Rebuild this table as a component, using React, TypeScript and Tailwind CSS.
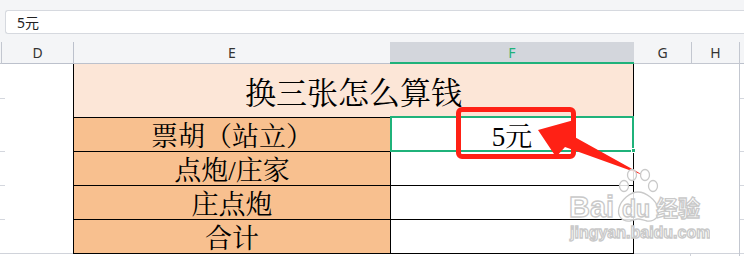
export default function App() {
  const sans = "font-['Noto_Sans','Noto_Sans_CJK_SC',sans-serif]";
  const serif = "font-['Liberation_Serif','Noto_Serif_CJK_SC','Noto_Sans_CJK_SC',serif]";
  const rows = [
    { label: "票胡（站立）", value: "5元" },
    { label: "点炮/庄家", value: "" },
    { label: "庄点炮", value: "" },
    { label: "合计", value: "" },
  ];
  return (
    <div className="relative w-[744px] h-[256px] overflow-hidden bg-white">
      {/* formula bar */}
      <div className="h-[42px] bg-[#f4f5f7] pt-[10px] pl-[5px]">
        <div className={`h-[24px] bg-white border border-r-0 border-[#d6d9df] rounded-l-[3px] flex items-center pl-[11px] text-[14px] text-[#222] ${sans}`}>
          5元
        </div>
      </div>
      {/* column header */}
      <div className={`flex h-[22px] bg-[#f4f5f7] text-[14px] text-[#333] ${sans}`}>
        <div className="w-[2px] border-r border-b border-[#c3c7d0]" />
        <div className="w-[72px] border-r border-b border-[#bcc1cc] flex items-center justify-center">D</div>
        <div className="w-[316px] border-b border-[#bcc1cc] flex items-center justify-center">E</div>
        <div className="w-[244px] bg-[#d3d6dc] border-b-2 border-[#1fb27a] text-[#1fb27a] flex items-center justify-center">F</div>
        <div className="w-[58px] border-r border-b border-[#c3c7d0] flex items-center justify-center">G</div>
        <div className="w-[48px] border-r border-b border-[#c3c7d0] flex items-center justify-center">H</div>
        <div className="flex-1 border-b border-[#bcc1cc]" />
      </div>
      {/* body */}
      <div className="flex h-[192px]">
        {/* C/D */}
        <div className="w-[73px] flex flex-col">
          <div className="h-[189px] flex">
            <div className="w-[5px] flex flex-col">
              <div className="h-[35px] border-b border-[#d4d7de]" />
              <div className="h-[53px] border-b border-[#d4d7de]" />
              <div className="h-[34px] border-b border-[#d4d7de]" />
              <div className="h-[34px] border-b border-[#d4d7de]" />
            </div>
            <div className="flex-1" />
          </div>
          <div className="h-[1px] bg-[#d0d3da]" />
        </div>
        {/* table */}
        <div className="w-[561px] flex flex-col border-l border-r border-black self-start">
          <div className={`h-[54px] bg-[#fce6d7] border-b border-black flex items-center justify-center pt-[6px] text-[31px] leading-none text-black ${serif}`}>
            换三张怎么算钱
          </div>
          {rows.map((r, i) => (
            <div key={i} className="h-[34px] border-b border-black flex">
              <div className={`w-[317px] bg-[#f8c08f] border-r border-black flex items-center justify-center pt-[5px] text-[27px] leading-none text-black ${serif}`}>
                {r.label}
              </div>
              <div className={`flex-1 bg-white flex items-center justify-center pt-[5px] text-[27px] leading-none text-black ${serif}`}>
                {r.value}
              </div>
            </div>
          ))}
        </div>
        {/* G/H */}
        <div className="w-[105px] flex flex-col">
          <div className="h-[189px]" />
          <div className="h-[1px] bg-[#d0d3da]" />
          <div className="flex-1 flex">
            <div className="w-[57px] border-r border-[#d0d3da]" />
          </div>
        </div>
        {/* I */}
        <div className="flex-1 border-l border-[#c3c7d0] flex flex-col">
          <div className="h-[35px] border-b border-[#d4d7de]" />
          <div className="h-[53px] border-b border-[#d4d7de]" />
          <div className="h-[34px] border-b border-[#d4d7de]" />
          <div className="h-[34px] border-b border-[#d4d7de]" />
          <div className="h-[34px] border-b border-[#d4d7de]" />
        </div>
      </div>

      {/* selection */}
      <div className="absolute left-[390px] top-[116px] w-[244px] h-[36px] border-2 border-[#1fb27a]" />
      <div className="absolute left-[631px] top-[148px] w-[5px] h-[5px] bg-[#1fb27a] border border-white" />

      {/* red highlight rect */}
      <div className="absolute left-[456px] top-[107px] w-[120px] h-[52px] border-[5px] border-[#ff2115] rounded-[6px]" />

      {/* arrow */}
      <svg className="absolute left-0 top-0" width="744" height="256" viewBox="0 0 744 256">
        <polygon points="538,130 574,120 571,135 643,175 565,147 556,157" fill="#ff2115" />
      </svg>

      {/* watermark */}
      <svg className="absolute left-[560px] top-[166px]" width="150" height="80" viewBox="0 0 150 80">
        <g fill="rgba(255,255,255,0.85)" stroke="#c9c9c9" strokeWidth="1.3">
          <text x="9" y="51" fontFamily="Liberation Sans, Arial, sans-serif" fontWeight="bold" fontSize="29">Bai</text>
          <ellipse cx="64" cy="20" rx="4.5" ry="5.5" />
          <ellipse cx="72" cy="9" rx="4.5" ry="5.5" />
          <ellipse cx="85" cy="9" rx="4.5" ry="5.5" />
          <ellipse cx="93" cy="20" rx="4.5" ry="5.5" />
          <path d="M78 26 C70 26 61 34 59 42 C57 50 62 56 70 55 C74 54 76 53 78 53 C80 53 83 54 87 55 C95 56 100 50 98 42 C96 34 86 26 78 26 Z" />
          <text x="62" y="51" fontFamily="Liberation Sans, Arial, sans-serif" fontWeight="bold" fontSize="23">du</text>
          <text x="96" y="50" fontFamily="Noto Sans CJK SC, sans-serif" fontWeight="bold" fontSize="22">经验</text>
          <text x="10" y="72" fontFamily="Liberation Sans, Arial, sans-serif" fontWeight="bold" fontSize="16">jingyan.baidu.com</text>
        </g>
      </svg>
    </div>
  );
}
